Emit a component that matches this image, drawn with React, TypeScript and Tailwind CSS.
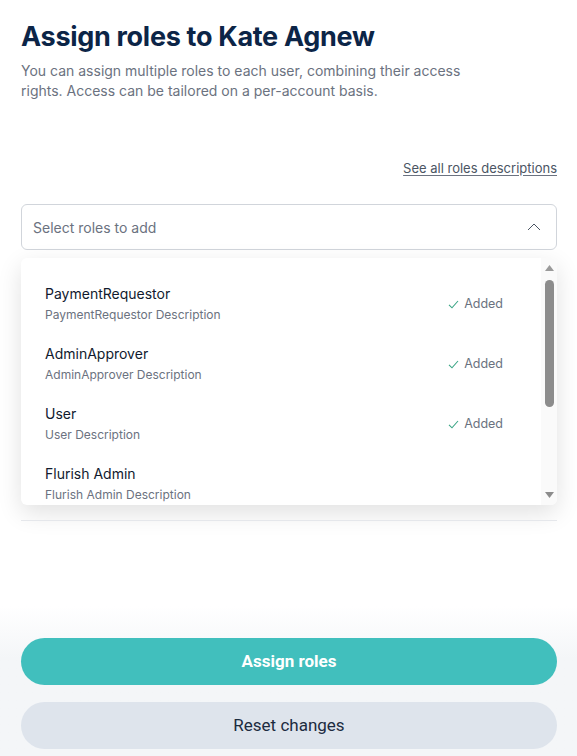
import React from "react";

type Role = {
  name: string;
  description: string;
  added: boolean;
};

const roles: Role[] = [
  { name: "PaymentRequestor", description: "PaymentRequestor Description", added: true },
  { name: "AdminApprover", description: "AdminApprover Description", added: true },
  { name: "User", description: "User Description", added: true },
  { name: "Flurish Admin", description: "Flurish Admin Description", added: false },
];

const Check = () => (
  <svg width="11" height="9" viewBox="0 0 11 9" fill="none">
    <path d="M1 4.8 L4 7.8 L10 1" stroke="#3aa585" strokeWidth="1.1" />
  </svg>
);

const RoleRow = ({ role }: { role: Role }) => {
  return (
    <div className="flex items-center h-[60px] pl-[24px] pr-[38px]">
      <div className="flex flex-col flex-1 gap-[2px]">
        <div className="text-[14px] leading-[20px] text-[#111a2e]">{role.name}</div>
        <div className="text-[12px] leading-[18px] text-[#6b7280]">{role.description}</div>
      </div>
      {role.added && (
        <div className="flex items-center gap-[5px] text-[12.5px] text-[#6b7280]">
          <Check />
          <span>Added</span>
        </div>
      )}
    </div>
  );
};

export default function App() {
  return (
    <div
      className="h-[756px] flex flex-col bg-white overflow-hidden"
      style={{ fontFamily: "Inter, 'Noto Sans', sans-serif" }}
    >
      <div className="pl-[21px] pr-[20px] pt-[19px] flex-1">
        <h1 className="text-[27px] leading-[36px] font-bold text-[#0c2547] tracking-[-0.3px]">
          Assign roles to Kate Agnew
        </h1>
        <p className="mt-[6px] text-[14px] leading-[20px] text-[#6b7280] w-[450px]">
          You can assign multiple roles to each user, combining their access rights. Access can be
          tailored on a per-account basis.
        </p>

        <div className="flex justify-end mt-[58px]">
          <a className="text-[13px] leading-[18px] text-[#4b5563] underline underline-offset-2 decoration-[#6b7280]">
            See all roles descriptions
          </a>
        </div>

        <div className="mt-[27px] h-[46px] border border-[#d1d5db] rounded-[6px] flex items-center justify-between pl-[11px] pr-[15px]">
          <span className="text-[14px] text-[#6b7280]">Select roles to add</span>
          <svg width="14" height="8" viewBox="0 0 14 8" fill="none">
            <path d="M1 7 L7 1 L13 7" stroke="#4b5563" strokeWidth="1" />
          </svg>
        </div>

        <div className="mt-[8px] h-[247px] bg-white rounded-[6px] shadow-[0_8px_24px_rgba(0,0,0,0.12)] flex overflow-hidden">
          <div className="flex-1 pt-[16px] overflow-hidden">
            {roles.map((role) => (
              <RoleRow key={role.name} role={role} />
            ))}
          </div>
          <div className="w-[16px] bg-[#fafafa] flex flex-col items-center pt-[7px] pb-[7px]">
            <svg width="9" height="6" viewBox="0 0 9 6">
              <path d="M0 6 L4.5 0 L9 6 Z" fill="#9a9a9a" />
            </svg>
            <div className="mt-[9px] w-[9px] h-[127px] rounded-full bg-[#8c8c8c]" />
            <div className="flex-1" />
            <svg width="9" height="6" viewBox="0 0 9 6">
              <path d="M0 0 L4.5 6 L9 0 Z" fill="#8c8c8c" />
            </svg>
          </div>
        </div>

        <div className="mt-[15px] border-t border-[#e5e7eb]" />
      </div>

      <div
        className="pl-[21px] pr-[20px] pt-[32px] pb-[7px] flex flex-col gap-[17px] bg-gradient-to-b from-white to-[#f4f6f8] to-[35%]"
        style={{ fontFamily: "Roboto, Inter, sans-serif" }}
      >
        <button className="h-[47px] rounded-full bg-[#41bfbd] text-white text-[17px] font-bold">
          Assign roles
        </button>
        <button className="h-[47px] rounded-full bg-[#dee4ec] text-[#1c2b3f] text-[17px]">
          Reset changes
        </button>
      </div>
    </div>
  );
}
